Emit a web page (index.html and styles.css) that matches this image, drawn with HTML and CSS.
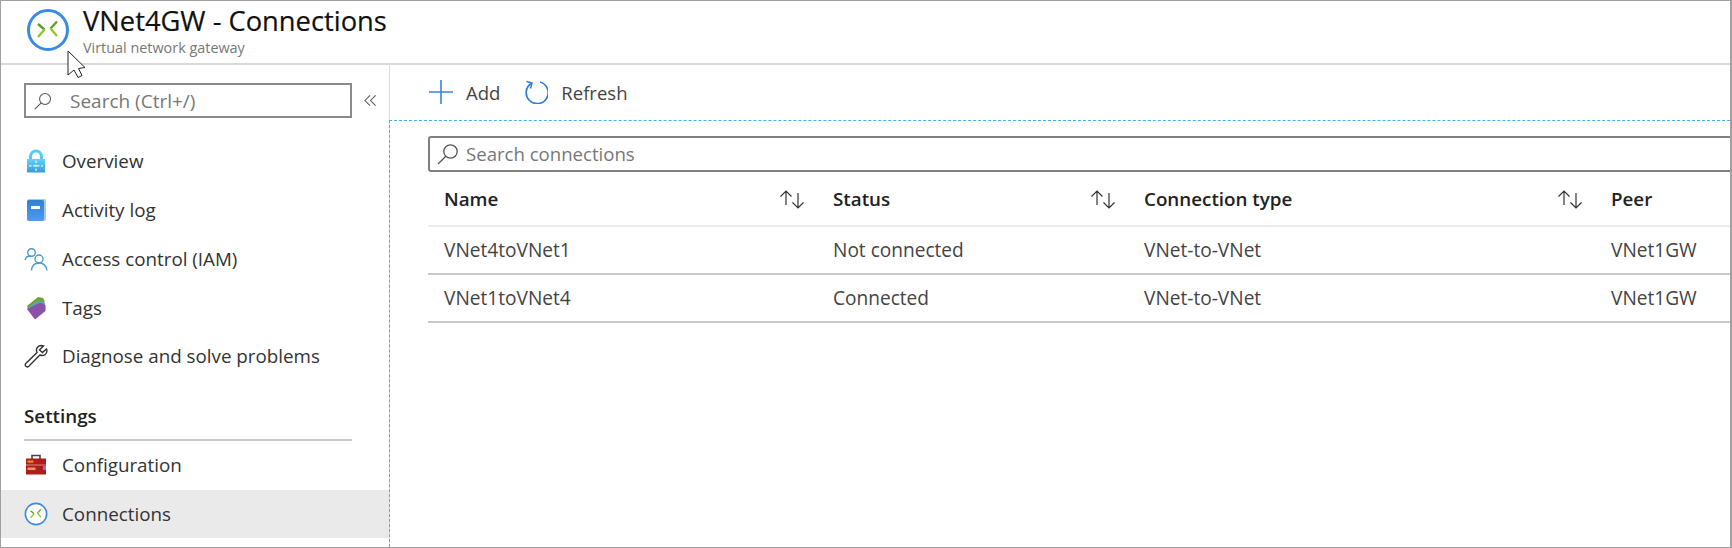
FILE: index.html
```html
<!DOCTYPE html>
<html lang="en">
<head>
    <meta charset="UTF-8">
    <title>VNet4GW - Connections</title>
    <link rel="stylesheet" href="styles.css">
</head>
<body>
    <svg class="defs" width="0" height="0">
        <symbol id="gateway" viewBox="0 0 44 44">
            <circle cx="22" cy="22" r="19.5" fill="#fff" stroke="#3b8ae2" stroke-width="3"/>
            <path d="M12 16 L18.5 21.5" stroke="#5c9e1e" stroke-width="2.3" fill="none"/>
            <path d="M18.5 21.5 L12 29" stroke="#8cc824" stroke-width="2.3" fill="none"/>
            <path d="M31 13.5 L24.5 20.5" stroke="#5c9e1e" stroke-width="2.3" fill="none"/>
            <path d="M24.5 20.5 L31 28" stroke="#8cc824" stroke-width="2.3" fill="none"/>
        </symbol>
        <symbol id="search" viewBox="0 0 22 22">
            <circle cx="13.5" cy="8.5" r="6.7" fill="none" stroke="#555" stroke-width="1.3"/>
            <path d="M8.8 13.2 L1 21" stroke="#555" stroke-width="1.3" fill="none"/>
        </symbol>
        <symbol id="sort" viewBox="0 0 26 20">
            <path d="M7 16 V2 M1.5 7.5 L7 2 L12.5 7.5" stroke="#333" stroke-width="1.2" fill="none"/>
            <path d="M19 4 V19 M13.5 13.5 L19 19 L24.5 13.5" stroke="#333" stroke-width="1.2" fill="none"/>
        </symbol>
    </svg>

    <div class="frame">
        <header class="page-header">
            <svg class="header-icon"><use href="#gateway"/></svg>
            <div class="header-text">
                <h1>VNet4GW - Connections</h1>
                <p>Virtual network gateway</p>
            </div>
        </header>

        <div class="page-body">
            <nav class="sidebar">
                <div class="side-search-row">
                    <div class="side-search">
                        <svg class="side-search-icon"><use href="#search"/></svg>
                        <span>Search (Ctrl+/)</span>
                    </div>
                    <svg class="collapse" viewBox="0 0 14 14">
                        <path d="M6.5 1.5 L1 7 L6.5 12.5 M12.5 1.5 L7 7 L12.5 12.5" stroke="#555" stroke-width="1.1" fill="none"/>
                    </svg>
                </div>

                <ul class="menu">
                    <li>
                        <svg class="menu-icon" viewBox="0 0 24 24">
                            <defs>
                                <linearGradient id="lockbody" x1="0" y1="0" x2="0" y2="1">
                                    <stop offset="0" stop-color="#62d2f6"/>
                                    <stop offset="1" stop-color="#3a9bd6"/>
                                </linearGradient>
                            </defs>
                            <path d="M6.5 12 V8 C6.5 0 17.5 0 17.5 8 V12" stroke="#55cbf2" stroke-width="3" fill="none"/>
                            <rect x="3" y="10" width="18" height="13.5" fill="url(#lockbody)"/>
                            <path d="M12 11.5 V22 M5 16.8 H19" stroke="#e8f8fe" stroke-width="1.2" stroke-dasharray="2.5 1.5"/>
                        </svg>
                        <span>Overview</span>
                    </li>
                    <li>
                        <svg class="menu-icon" viewBox="0 0 24 24">
                            <defs>
                                <linearGradient id="bookbody" x1="0" y1="0" x2="0" y2="1">
                                    <stop offset="0" stop-color="#2f7fd4"/>
                                    <stop offset="1" stop-color="#4f9cec"/>
                                </linearGradient>
                            </defs>
                            <rect x="3" y="1" width="19" height="22" rx="2" fill="#a9c9ea"/>
                            <rect x="3" y="2" width="17" height="21" rx="2" fill="url(#bookbody)"/>
                            <rect x="7" y="8" width="9" height="3" fill="#fff"/>
                        </svg>
                        <span>Activity log</span>
                    </li>
                    <li>
                        <svg class="menu-icon" viewBox="0 0 24 24">
                            <g fill="none" stroke="#4a9bd0" stroke-width="1.4">
                                <circle cx="7.5" cy="5.5" r="3.8"/>
                                <path d="M1 13 C2 9.5 5 9 7 9.5"/>
                                <circle cx="15" cy="12" r="4"/>
                                <path d="M7.5 23.5 C8 17 12 16 15 16 C18 16 22 17 23 23.5"/>
                            </g>
                        </svg>
                        <span>Access control (IAM)</span>
                    </li>
                    <li>
                        <svg class="menu-icon" viewBox="0 0 24 24">
                            <path d="M3 10 L14 1 L19 2 L21 6 L5 14 Z" fill="#6ea51d"/>
                            <path d="M3 12 L15 4 L21 7 L21 11 L7 17 Z" fill="#59a5c9"/>
                            <path d="M3 13 L16 6.5 L21.5 9 V15 L11 23.5 Z" fill="#8a52a8"/>
                        </svg>
                        <span>Tags</span>
                    </li>
                    <li>
                        <svg class="menu-icon" viewBox="0 0 24 24">
                            <path d="M17 1.5 C13.5 1.5 11.5 5 13 8.5 L1.8 19.5 C0 21.5 2.8 24 4.8 22.2 L15.8 11 C19.5 12.5 23 10.5 23 6.5 L22.5 5 L18.5 8.5 L15.5 6 L19.5 2 Z" fill="none" stroke="#333" stroke-width="1.4"/>
                        </svg>
                        <span>Diagnose and solve problems</span>
                    </li>
                </ul>

                <h2 class="menu-heading">Settings</h2>

                <ul class="menu">
                    <li>
                        <svg class="menu-icon" viewBox="0 0 24 24">
                            <path d="M8 6 V2.5 H16 V6" fill="none" stroke="#444" stroke-width="1.6"/>
                            <rect x="2" y="5.5" width="20" height="16" fill="#b01c1c"/>
                            <rect x="2" y="11.5" width="20" height="1" fill="#d98a80"/>
                            <rect x="3.5" y="7.5" width="6" height="2.2" fill="#ee8a20"/>
                            <rect x="3.5" y="14.5" width="8" height="2.5" fill="#e89a70"/>
                            <rect x="19" y="13" width="3" height="4" fill="#9a6fb8"/>
                        </svg>
                        <span>Configuration</span>
                    </li>
                    <li class="active">
                        <svg class="menu-icon"><use href="#gateway"/></svg>
                        <span>Connections</span>
                    </li>
                </ul>
            </nav>

            <main class="content">
                <div class="toolbar">
                    <button class="tool tool-add">
                        <svg class="tool-icon" viewBox="0 0 24 24">
                            <path d="M12 0 V24 M0 12 H24" stroke="#3a85d8" stroke-width="1.6" fill="none"/>
                        </svg>
                        <span>Add</span>
                    </button>
                    <button class="tool">
                        <svg class="tool-icon" viewBox="0 0 24 24">
                            <path d="M7.5 3.2 A11 11 0 1 0 16 2" stroke="#2a7fdc" stroke-width="1.7" fill="none"/>
                            <path d="M2.5 1.5 L8 3 L6.5 8.5" stroke="#2a7fdc" stroke-width="1.5" fill="none"/>
                        </svg>
                        <span>Refresh</span>
                    </button>
                </div>

                <div class="panel">
                    <div class="conn-search">
                        <svg class="conn-search-icon"><use href="#search"/></svg>
                        <span>Search connections</span>
                    </div>

                    <table class="grid">
                        <colgroup>
                            <col class="col-name">
                            <col class="col-status">
                            <col class="col-type">
                            <col>
                        </colgroup>
                        <tr>
                            <th><div class="th-inner">Name <svg class="sort"><use href="#sort"/></svg></div></th>
                            <th><div class="th-inner">Status <svg class="sort"><use href="#sort"/></svg></div></th>
                            <th><div class="th-inner">Connection type <svg class="sort"><use href="#sort"/></svg></div></th>
                            <th>Peer</th>
                        </tr>
                        <tr>
                            <td>VNet4toVNet1</td>
                            <td>Not connected</td>
                            <td>VNet-to-VNet</td>
                            <td>VNet1GW</td>
                        </tr>
                        <tr>
                            <td>VNet1toVNet4</td>
                            <td>Connected</td>
                            <td>VNet-to-VNet</td>
                            <td>VNet1GW</td>
                        </tr>
                    </table>
                </div>
            </main>
        </div>

        <svg class="cursor" viewBox="0 0 20 28">
            <path d="M1 1 V25 L7 20 L11 27.5 L15 25.5 L11.5 18.5 L18 17.5 Z" fill="#fff" stroke="#222" stroke-width="1"/>
        </svg>
    </div>
</body>
</html>
```

FILE: styles.css
```css
* {
    box-sizing: border-box;
}
body {
    margin: 0;
    background: #fff;
    font-family: "Open Sans", "Noto Sans", sans-serif;
    color: #333;
}
.defs {
    position: absolute;
}
.frame {
    position: relative;
    width: 1732px;
    height: 548px;
    border: 1px solid #a0a0a0;
    border-width: 1px 2px 1px 1px;
    overflow: hidden;
}
.page-header {
    display: flex;
    height: 64px;
    padding-left: 25px;
    border-bottom: 2px solid #d9d9d9;
}
.header-icon {
    width: 44px;
    height: 44px;
    margin-top: 7px;
}
.header-text {
    margin-left: 13px;
}
.page-header h1 {
    margin: 1px 0 0;
    font-size: 27.3px;
    line-height: 37px;
    font-weight: 400;
    color: #111;
    -webkit-text-stroke: 0.2px #111;
}
.page-header p {
    margin: 0;
    font-size: 14.4px;
    line-height: 18px;
    color: #777;
}
.page-body {
    display: flex;
    height: 482px;
}
.sidebar {
    width: 388px;
    flex-shrink: 0;
    padding-top: 18px;
}
.side-search-row {
    display: flex;
    align-items: center;
    height: 35px;
    margin-left: 23px;
}
.side-search {
    display: flex;
    align-items: center;
    width: 328px;
    height: 35px;
    border: 2px solid #8a8a8a;
    color: #777;
    font-size: 19px;
}
.side-search-icon {
    width: 18px;
    height: 18px;
    margin: 0 18px 0 8px;
}
.collapse {
    width: 13px;
    height: 13px;
    margin-left: 12px;
}
.menu {
    list-style: none;
    margin: 0;
    padding: 0;
}
.side-search-row + .menu {
    margin-top: 19px;
}
.menu li {
    display: flex;
    align-items: center;
    height: 48.75px;
    padding-left: 23px;
    font-size: 18.8px;
    color: #333;
}
.menu li.active {
    background: #ebeaea;
}
.menu-icon {
    width: 24px;
    height: 24px;
    margin-right: 14px;
}
.menu-heading {
    margin: 21px 0 0 23px;
    padding-bottom: 9px;
    width: 328px;
    border-bottom: 2px solid #c8c8c8;
    font-size: 18.8px;
    line-height: 28px;
    font-weight: 600;
    color: #222;
}
.content {
    flex: 1;
    min-width: 0;
    border-left: 1px solid #dcdcdc;
}
.toolbar {
    display: flex;
    height: 55px;
    padding: 7px 0 0 39px;
    gap: 24px;
}
.tool {
    display: flex;
    align-items: center;
    height: 40px;
    padding: 0;
    border: none;
    background: none;
    font-family: inherit;
    font-size: 18.5px;
    color: #444;
}
.tool-icon {
    width: 24px;
    height: 24px;
    margin-right: 13px;
}
.panel {
    height: 427px;
    margin-left: -1px;
    padding: 15px 0 0 38px;
    border-top: 1px dashed #3cb6ea;
    border-left: 1px dashed #3cb6ea;
}
.conn-search {
    display: flex;
    align-items: center;
    height: 36px;
    margin-right: -6px;
    padding-bottom: 2px;
    border: 2px solid #808080;
    border-radius: 3px;
    font-size: 18.6px;
    color: #777;
}
.conn-search-icon {
    width: 22px;
    height: 22px;
    margin: 2px 7px 0 7px;
}
.grid {
    width: 1303px;
    border-collapse: collapse;
    table-layout: fixed;
    font-size: 19.1px;
}
.col-name {
    width: 389px;
}
.col-status {
    width: 311px;
}
.col-type {
    width: 467px;
}
.grid th {
    height: 54px;
    padding: 0 0 0 16px;
    text-align: left;
    font-size: 18.8px;
    font-weight: 600;
    color: #222;
    border-bottom: 2px solid #ececec;
}
.th-inner {
    display: flex;
    align-items: center;
    justify-content: space-between;
    padding-right: 12px;
}
.sort {
    width: 26px;
    height: 20px;
}
.grid td {
    height: 48px;
    padding: 0 0 0 16px;
    color: #444;
    border-bottom: 2px solid #c8c8c8;
}
.cursor {
    position: absolute;
    left: 66px;
    top: 49px;
    width: 20px;
    height: 28px;
}
```
